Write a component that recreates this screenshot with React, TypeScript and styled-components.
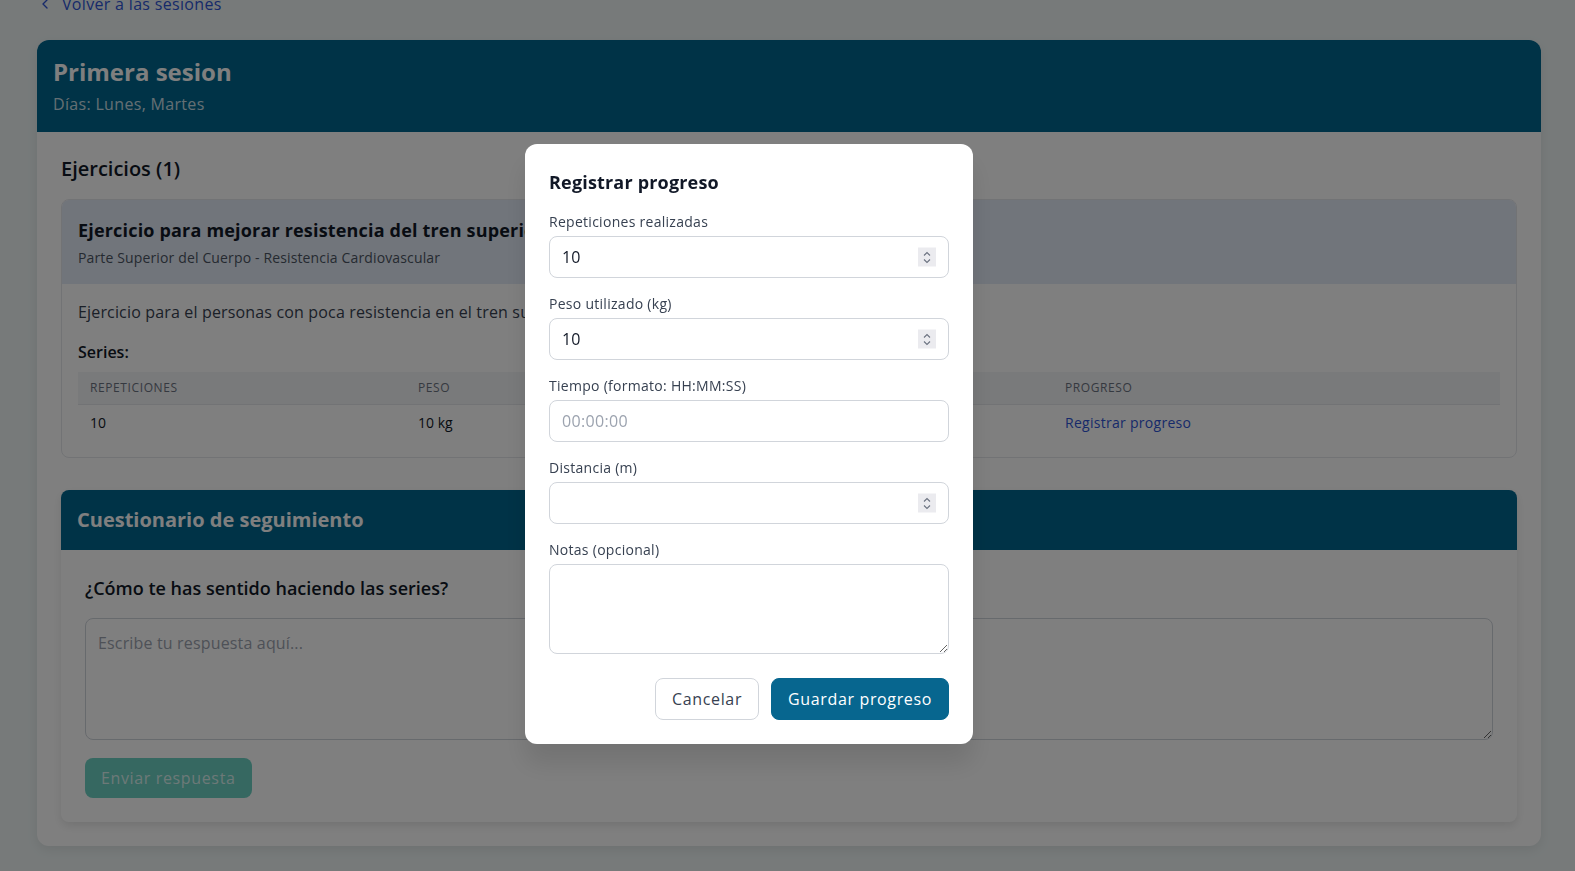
import React from 'react';
import styled, { createGlobalStyle } from 'styled-components';
import { ChevronLeft } from 'lucide-react';


const GlobalStyle = createGlobalStyle`
  * { box-sizing: border-box; }
  html, body {
    margin: 0;
    padding: 0;
    background: #eef5f5;
    font-family: "Open Sans", "Noto Sans", sans-serif;
    color: #111827;
  }
  body { overflow: hidden; }
`


const series = [
  { reps: '10', peso: '10 kg', descanso: '60 s' },
]


function NumberInput({ value }: { value?: number }) {
  return (
    <InputWrap>
      <Input type="number" defaultValue={value} />
      <Spinner>
        <svg width="8" height="14" viewBox="0 0 8 14" fill="none" stroke="#6b7280" strokeWidth="1.1">
          <path d="M1 5 L4 2 L7 5" />
          <path d="M1 9 L4 12 L7 9" />
        </svg>
      </Spinner>
    </InputWrap>
  )
}


function App() {
  return (
    <>
      <GlobalStyle />
      <Page>
        <BackLink href="#">
          <ChevronLeft size={16} strokeWidth={2} />
          <span>Volver a las sesiones</span>
        </BackLink>

        <SessionCard>
          <SessionHeader>
            <SessionTitle>Primera sesion</SessionTitle>
            <SessionDays>Días: Lunes, Martes</SessionDays>
          </SessionHeader>

          <SessionBody>
            <SectionTitle>Ejercicios (1)</SectionTitle>

            <ExerciseCard>
              <ExerciseHeader>
                <ExerciseTitle>Ejercicio para mejorar resistencia del tren superior</ExerciseTitle>
                <ExerciseMeta>Parte Superior del Cuerpo - Resistencia Cardiovascular</ExerciseMeta>
              </ExerciseHeader>
              <ExerciseBody>
                <Description>Ejercicio para el personas con poca resistencia en el tren superior</Description>
                <SeriesLabel>Series:</SeriesLabel>
                <Table>
                  <thead>
                    <tr>
                      <Th $w="328px">Repeticiones</Th>
                      <Th $w="321px">Peso</Th>
                      <Th $w="326px">Descanso</Th>
                      <Th>Progreso</Th>
                    </tr>
                  </thead>
                  <tbody>
                    {series.map((s, key) => (
                      <tr key={key}>
                        <Td>{s.reps}</Td>
                        <Td>{s.peso}</Td>
                        <Td>{s.descanso}</Td>
                        <Td><TableLink href="#">Registrar progreso</TableLink></Td>
                      </tr>
                    ))}
                  </tbody>
                </Table>
              </ExerciseBody>
            </ExerciseCard>

            <QuestionCard>
              <QuestionHeader>Cuestionario de seguimiento</QuestionHeader>
              <QuestionBody>
                <Question>¿Cómo te has sentido haciendo las series?</Question>
                <AnswerArea rows={4} placeholder="Escribe tu respuesta aquí..." />
                <SendButton disabled>Enviar respuesta</SendButton>
              </QuestionBody>
            </QuestionCard>
          </SessionBody>
        </SessionCard>
      </Page>

      <Overlay>
        <Modal>
          <ModalTitle>Registrar progreso</ModalTitle>

          <Field>
            <Label>Repeticiones realizadas</Label>
            <NumberInput value={10} />
          </Field>
          <Field>
            <Label>Peso utilizado (kg)</Label>
            <NumberInput value={10} />
          </Field>
          <Field>
            <Label>Tiempo (formato: HH:MM:SS)</Label>
            <Input type="text" placeholder="00:00:00" />
          </Field>
          <Field>
            <Label>Distancia (m)</Label>
            <NumberInput />
          </Field>
          <Field>
            <Label>Notas (opcional)</Label>
            <Notes rows={3} />
          </Field>

          <Actions>
            <Button $variant="ghost">Cancelar</Button>
            <Button $variant="primary">Guardar progreso</Button>
          </Actions>
        </Modal>
      </Overlay>
    </>
  )
}


const Page = styled.div`
  margin-top: -8px;
  padding: 0 34px 32px 37px;
`


const BackLink = styled.a`
  display: flex;
  align-items: center;
  gap: 9px;
  height: 24px;
  margin-bottom: 24px;
  font-size: 16px;
  letter-spacing: 0.02em;
  color: #2f55d4;
  text-decoration: none;
`


const SessionCard = styled.div`
  background: #ffffff;
  border-radius: 12px;
  overflow: hidden;
  box-shadow: 0 4px 12px rgba(0, 0, 0, 0.08);
`


const SessionHeader = styled.div`
  background: #00668e;
  padding: 16px;
`


const SessionTitle = styled.h1`
  margin: 0 0 4px;
  font-size: 24px;
  line-height: 32px;
  font-weight: 700;
  color: #ffffff;
`


const SessionDays = styled.div`
  font-size: 16px;
  line-height: 24px;
  letter-spacing: 0.02em;
  color: rgba(255, 255, 255, 0.8);
`


const SessionBody = styled.div`
  padding: 23px 24px 24px;
`


const SectionTitle = styled.h2`
  margin: 0 0 16px;
  font-size: 20px;
  line-height: 28px;
  font-weight: 600;
  color: #111827;
`


const ExerciseCard = styled.div`
  border: 1px solid #e5e7eb;
  border-radius: 8px;
  overflow: hidden;
`


const ExerciseHeader = styled.div`
  background: #e3eaf6;
  padding: 16px;
`


const ExerciseTitle = styled.h3`
  margin: 0 0 4px;
  font-size: 18px;
  line-height: 28px;
  font-weight: 700;
  letter-spacing: 0.01em;
  color: #111827;
  white-space: nowrap;
`


const ExerciseMeta = styled.div`
  font-size: 14px;
  line-height: 20px;
  letter-spacing: 0.01em;
  color: #4b5563;
`


const ExerciseBody = styled.div`
  padding: 16px;
`


const Description = styled.p`
  margin: 0 0 16px;
  font-size: 16px;
  line-height: 24px;
  letter-spacing: 0.01em;
  color: #374151;
`


const SeriesLabel = styled.div`
  margin-bottom: 8px;
  font-size: 16px;
  line-height: 24px;
  font-weight: 600;
  color: #111827;
`


const Table = styled.table`
  width: 100%;
  border-collapse: collapse;
  table-layout: fixed;

  thead tr {
    background: #f3f4f6;
    border-bottom: 1px solid #e5e7eb;
  }
`


const Th = styled.th<{ $w?: string }>`
  width: ${p => p.$w || 'auto'};
  padding: 8px 12px;
  text-align: left;
  font-size: 12px;
  line-height: 16px;
  font-weight: 500;
  letter-spacing: 0.05em;
  text-transform: uppercase;
  color: #6b7280;
`


const Td = styled.td`
  padding: 8px 12px;
  font-size: 14px;
  line-height: 20px;
  color: #111827;
`


const TableLink = styled.a`
  letter-spacing: 0.02em;
  color: #2f55d4;
  text-decoration: none;
`


const QuestionCard = styled.div`
  margin-top: 32px;
  background: #ffffff;
  border-radius: 8px;
  overflow: hidden;
  box-shadow: 0 4px 10px rgba(0, 0, 0, 0.1);
`


const QuestionHeader = styled.div`
  background: #00668e;
  padding: 16px;
  font-size: 20px;
  line-height: 28px;
  font-weight: 700;
  color: #ffffff;
`


const QuestionBody = styled.div`
  padding: 24px;
`


const Question = styled.div`
  margin-bottom: 16px;
  font-size: 18px;
  line-height: 28px;
  font-weight: 600;
  color: #111827;
`


const AnswerArea = styled.textarea`
  display: block;
  width: 100%;
  padding: 12px;
  border: 1px solid #cfd4db;
  border-radius: 8px;
  font-family: inherit;
  font-size: 16px;
  line-height: 24px;
  color: #111827;
  resize: vertical;

  &::placeholder { color: #9ca3af; letter-spacing: 0.01em; }
`


const SendButton = styled.button`
  margin-top: 18px;
  height: 40px;
  padding: 0 16px;
  border: none;
  border-radius: 8px;
  background: #6cd0c3;
  font-family: inherit;
  font-size: 16px;
  letter-spacing: 0.04em;
  color: rgba(255, 255, 255, 0.75);
`


const Overlay = styled.div`
  position: fixed;
  inset: 0;
  background: rgba(0, 0, 0, 0.5);
  display: flex;
  justify-content: center;
  align-items: flex-start;
  padding: 144px 77px 0 0;
`


const Modal = styled.div`
  width: 448px;
  padding: 24px;
  background: #ffffff;
  border-radius: 12px;
  box-shadow: 0 20px 25px rgba(0, 0, 0, 0.1);
`


const ModalTitle = styled.h2`
  margin: 0 0 16px;
  font-size: 18px;
  line-height: 28px;
  font-weight: 700;
  letter-spacing: 0.01em;
  color: #111827;
`


const Field = styled.div`
  display: flex;
  flex-direction: column;
  gap: 4px;
  margin-bottom: 16px;
`


const Label = styled.label`
  font-size: 14px;
  line-height: 20px;
  font-weight: 500;
  letter-spacing: 0.02em;
  color: #374151;
`


const InputWrap = styled.div`
  position: relative;
`


const Input = styled.input`
  display: block;
  width: 100%;
  height: 42px;
  padding: 8px 12px;
  border: 1px solid #d1d5db;
  border-radius: 8px;
  font-family: inherit;
  font-size: 16px;
  color: #111827;
  background: #ffffff;
  appearance: textfield;
  -moz-appearance: textfield;

  &::-webkit-inner-spin-button,
  &::-webkit-outer-spin-button {
    -webkit-appearance: none;
    margin: 0;
  }

  &::placeholder { color: #9ca3af; letter-spacing: 0.02em; }
`


const Spinner = styled.span`
  position: absolute;
  right: 13px;
  top: 50%;
  transform: translateY(-50%);
  width: 18px;
  height: 19px;
  display: flex;
  align-items: center;
  justify-content: center;
  background: #ebebef;
  pointer-events: none;
`


const Notes = styled.textarea`
  display: block;
  width: 100%;
  height: 90px;
  padding: 8px 12px;
  border: 1px solid #d1d5db;
  border-radius: 8px;
  font-family: inherit;
  font-size: 16px;
  line-height: 24px;
  resize: vertical;
`


const Actions = styled.div`
  display: flex;
  justify-content: flex-end;
  gap: 12px;
  margin-top: 24px;
`


const Button = styled.button<{ $variant: 'ghost' | 'primary' }>`
  height: 42px;
  padding: 0 16px;
  border-radius: 8px;
  font-family: inherit;
  font-size: 16px;
  letter-spacing: 0.04em;
  cursor: pointer;
  border: 1px solid ${p => p.$variant === 'primary' ? '#07668f' : '#d1d5db'};
  background: ${p => p.$variant === 'primary' ? '#07668f' : '#ffffff'};
  color: ${p => p.$variant === 'primary' ? '#ffffff' : '#374151'};
`


export default App
